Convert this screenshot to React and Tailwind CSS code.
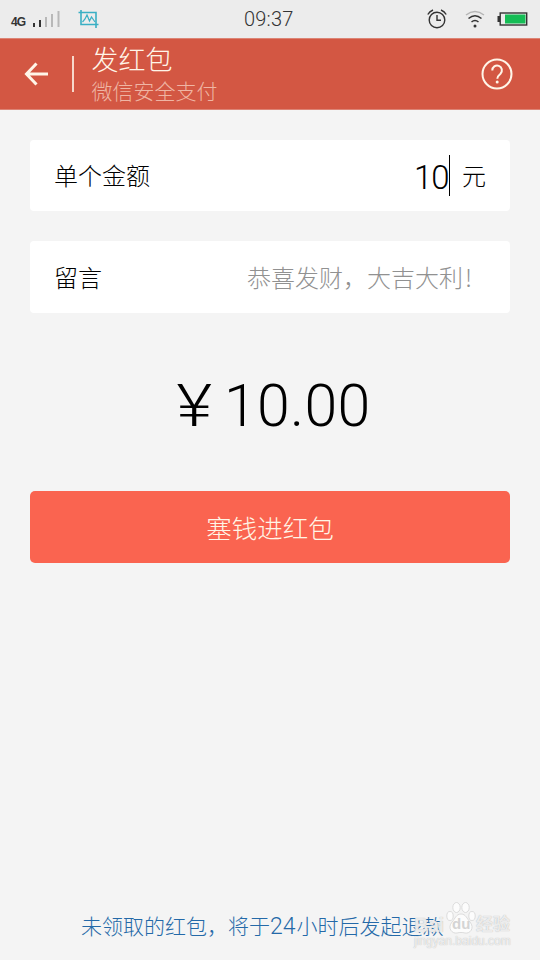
function StatusBar() {
  return (
    <div className="relative flex h-[38px] items-center justify-between bg-[#ececec] pl-[11px] pr-[12px] text-[#333]">
      <div className="flex items-center">
        <span className="mt-[6px] w-[21px] font-['Liberation_Sans'] text-[12px] font-bold leading-none tracking-[-0.8px]">4G</span>
        <svg className="h-7 w-7" viewBox="0 0 28 28" strokeWidth="2">
          <path d="M2 22v-4M8 22v-7" stroke="#333" />
          <path d="M14 22v-10M20 22v-13M26.500 22V6" stroke="#b8b8b8" />
        </svg>
        <svg className="ml-[18px] h-[18px] w-[21px]" viewBox="0 0 20 18" fill="none" stroke="#3aafc4" strokeWidth="1.600">
          <path d="M0 2.500h17.500V18M2.500 0v14.500H20" />
          <path d="M4 12l2.500-3L8.500 5l2.500 6 2-4 3.500 5" strokeWidth="1.200" />
        </svg>
      </div>
      <span className="absolute left-[244px] top-[9px] font-[Roboto] text-[20px] font-light leading-[20px] tracking-[0.2px]">09:37</span>
      <div className="flex items-center">
        <svg className="h-5 w-5" viewBox="0 0 20 20" fill="none" stroke="#333" strokeWidth="1.400">
          <circle cx="10" cy="11" r="7.800" />
          <path d="M10 6v5.200h4M.8 5.500Q2.500 2.300 6 1M19.200 5.500Q17.500 2.300 14 1" />
        </svg>
        <svg className="ml-[18px] h-[18px] w-[20px]" viewBox="0 0 20 18" fill="none" strokeWidth="1.500">
          <path d="M1 5Q10-2 19 5" stroke="#b5b5b5" />
          <path d="M3.500 8.500Q10 3 16.500 8.500M6.500 12Q10 9 13.500 12" stroke="#333" />
          <circle cx="10" cy="16" r="1.500" fill="#333" />
        </svg>
        <svg className="ml-[12px] h-[14px] w-[31px]" viewBox="0 0 31 14">
          <path d="M.5 4h2.500v6H.5z" fill="#333" />
          <rect x="3.200" y="1" width="26.500" height="12" fill="none" stroke="#333" strokeWidth="1.400" />
          <path d="M8 2.500h20.500v9H8z" fill="#15bd55" />
        </svg>
      </div>
    </div>
  );
}

function Header() {
  return (
    <header className="flex h-[72px] items-center border-y border-[#dc8475] bg-[#d35743] text-[#fff5e8]">
      <svg className="ml-[24px] h-[24px] w-[25px]" viewBox="0 0 25 24" fill="none" stroke="currentColor" strokeWidth="3">
        <path d="M12.500 1.500L2.500 12l10 10.500M2.500 12H24" />
      </svg>
      <div className="ml-[23px] h-[36px] w-[1.500px] bg-[#f7d8cb]" />
      <div className="-mt-[2px] ml-[18px] flex-1">
        <h1 className="text-[27px] leading-[34px]">发红包</h1>
        <p className="text-[21px] leading-[29px] text-[#efb5a4]">微信安全支付</p>
      </div>
      <svg className="mr-[27px] h-[32px] w-[32px]" viewBox="0 0 32 32" fill="none" stroke="currentColor" strokeWidth="2">
        <circle cx="16" cy="16" r="14.500" />
        <path d="M11.300 12.500a4.800 4.800 0 1 1 8.200 3.200c-2 1.700-3.200 2.600-3.200 5" />
        <circle cx="16.200" cy="24" r="1.500" fill="currentColor" stroke="none" />
      </svg>
    </header>
  );
}

// Pale paw stamp in the bottom corner
function Watermark() {
  return (
    <div className="absolute left-[414px] top-[901px] h-[48px] w-[100px] font-['Liberation_Sans','Noto_Sans_CJK_SC',sans-serif] font-bold leading-none text-white/75 [text-shadow:0_0_1px_#aaa]">
      <svg className="absolute left-[32px] top-0 h-[34px] w-[30px]" viewBox="0 0 30 34" fill="#fcfcfc" stroke="#d4d4d4" strokeWidth=".8">
        <ellipse cx="4" cy="15" rx="3.200" ry="4.500" />
        <ellipse cx="10.500" cy="6.500" rx="3.700" ry="5" />
        <ellipse cx="19.500" cy="6.500" rx="3.700" ry="5" />
        <ellipse cx="26" cy="15" rx="3.200" ry="4.500" />
        <path d="M15 13c5 0 6 5 9 8 5 6 0 12-5 11-3-.7-5-.7-8 0-5 1-10-5-5-11 3-3 4-8 9-8z" />
      </svg>
      <span className="absolute left-0 top-[14px] text-[20px] tracking-[-0.5px]">Bai</span>
      <span className="absolute left-[38px] top-[15px] text-[15px] text-[#d4d4d4] [text-shadow:none]">du</span>
      <span className="absolute left-[62px] top-[15px] whitespace-nowrap text-[17px]">经验</span>
      <span className="absolute left-0 top-[34px] text-[12px] font-normal">jingyan.baidu.com</span>
    </div>
  );
}

export default function App() {
  return (
    <div className="relative flex h-[960px] w-[540px] flex-col overflow-hidden bg-[#f4f4f4] font-['Noto_Sans_CJK_SC',sans-serif] font-light">
      <StatusBar />
      <Header />
      <main className="flex flex-1 flex-col px-[30px] pt-[30px]">
        <section className="flex h-[71px] items-center rounded-[4px] bg-white px-[24px] text-[24px] text-black">
          <span className="flex-1 pb-[2px]">单个金额</span>
          <span className="pt-[3px] font-[Roboto] text-[33px] leading-none tracking-[-1px]">10</span>
          <span className="h-[41px] w-[1.500px] bg-black" />
          <span className="ml-[12px] pb-[2px]">元</span>
        </section>
        <section className="mt-[30px] flex h-[72px] items-center justify-between rounded-[4px] bg-white pl-[24px] pr-[38px] text-[24px] text-black">
          <span>留言</span>
          <span className="whitespace-nowrap text-[#919191]">恭喜发财，大吉大利<span className="ml-[2px]">!</span></span>
        </section>
        <div className="mt-[56px] flex h-[72px] items-center justify-center pl-[9px] font-[Roboto] text-[59px] leading-none text-black">
          <span className="origin-center scale-x-[1.17]">¥</span>
          <span className="ml-[15px] tracking-[0.3px]">10.00</span>
        </div>
        <button className="mt-[50px] h-[72px] w-full rounded-[5px] bg-[#fa6450] text-[25.500px] text-[#fff5e6]">塞钱进红包</button>
        <p className="mb-[18px] mt-auto whitespace-nowrap pl-[51px] text-[21px] leading-[34px] text-[#2469a8]">
          未领取的红包，将于<span className="mr-[1px] font-[Roboto] text-[23px] leading-none">24</span>小时后发起退款
        </p>
      </main>
      <Watermark />
    </div>
  );
}
